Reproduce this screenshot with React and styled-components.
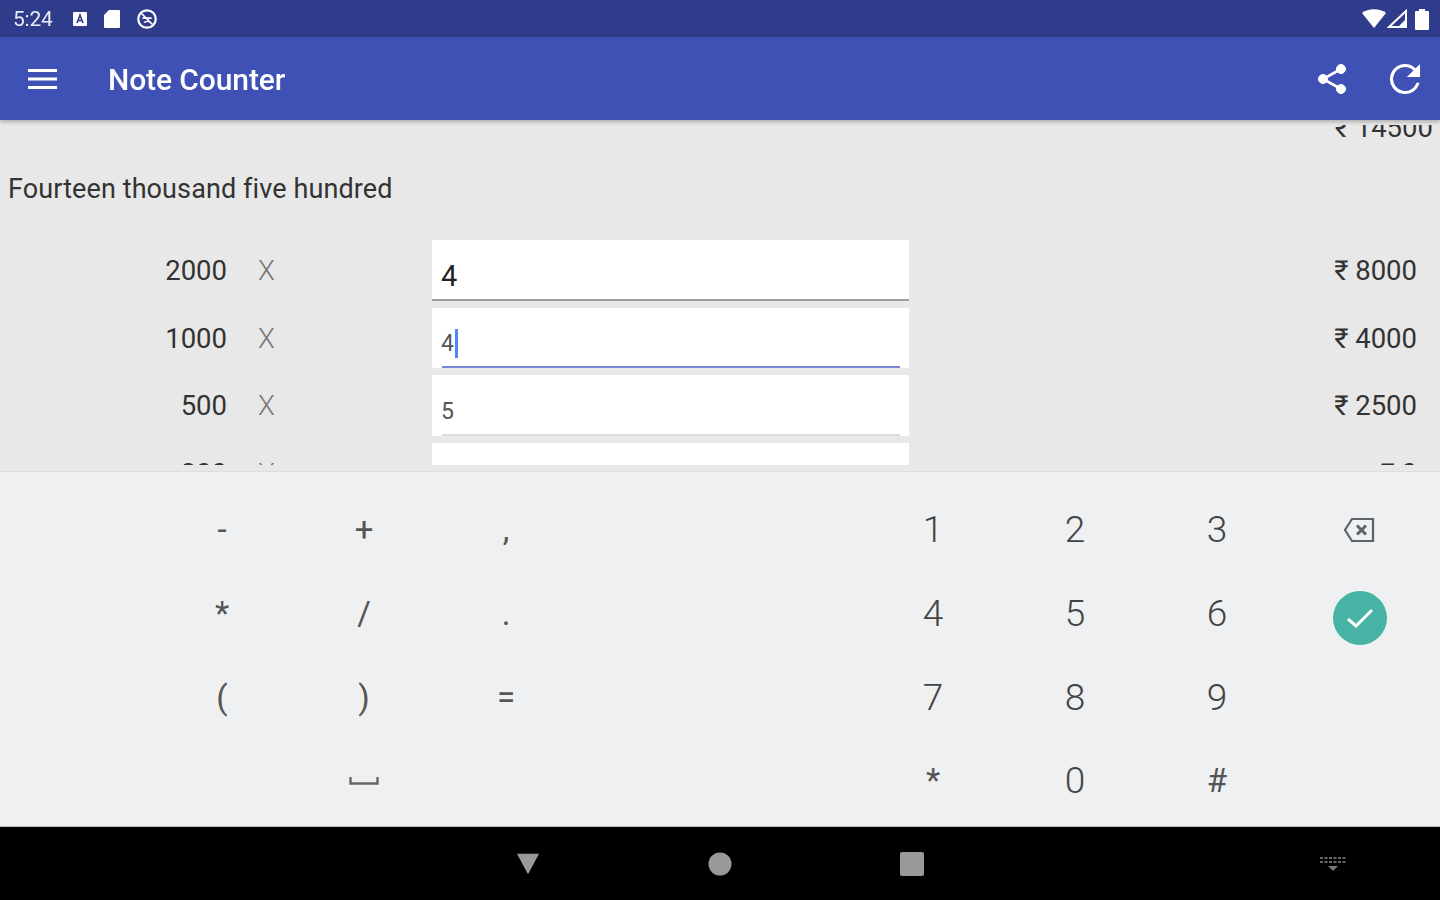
import React from "react";
import styled, { createGlobalStyle } from "styled-components";

const GlobalStyle = createGlobalStyle`
  html, body {
    margin: 0;
    padding: 0;
    background: #000;
  }
  body {
    font-family: Roboto, "Noto Sans", sans-serif;
  }
`;

const Screen = styled.div`
  width: 1440px;
  height: 900px;
  display: flex;
  flex-direction: column;
  overflow: hidden;
  filter: blur(0.6px);
`;

const StatusBar = styled.div`
  height: 37px;
  flex: none;
  background: #2f3c8c;
  color: #fff;
  display: flex;
  align-items: center;
  padding: 0 10px 0 13px;
  font-size: 21px;
  letter-spacing: -0.2px;
`;

const StatusLeft = styled.div`
  display: flex;
  align-items: center;
  gap: 15px;
  flex: 1;
`;

const StatusTime = styled.span`
  margin-right: 4px;
  opacity: 0.9;
`;

const StatusRight = styled.div`
  display: flex;
  align-items: center;
  gap: 1px;
`;

const AppBar = styled.header`
  height: 83px;
  flex: none;
  background: #3f51b5;
  color: #fff;
  display: flex;
  align-items: center;
  padding: 0 19px 0 28px;
  box-shadow: 0 2px 4px rgba(0, 0, 0, 0.25);
  position: relative;
  z-index: 1;
`;

const Title = styled.h1`
  margin: 2px 0 0 51px;
  flex: 1;
  font-size: 30px;
  font-weight: 500;
  letter-spacing: -0.1px;
`;

const BarActions = styled.div`
  display: flex;
  align-items: center;
  gap: 42px;
`;

const Content = styled.main`
  height: 352px;
  flex: none;
  box-sizing: border-box;
  padding: 5px 0 6px;
  background: #e8e8e8;
  color: #333;
  border-bottom: 1px solid #dedede;
`;

const Scroller = styled.div`
  height: 100%;
  overflow: hidden;
`;

const Total = styled.div`
  margin-top: -12px;
  height: 30px;
  line-height: 30px;
  text-align: right;
  padding-right: 7px;
  font-size: 27.5px;
`;

const Words = styled.div`
  margin: 31px 0 0 8px;
  height: 30px;
  line-height: 30px;
  font-size: 27px;
  letter-spacing: 0.1px;
`;

const Rows = styled.div`
  margin-top: 36px;
  display: flex;
  flex-direction: column;
  gap: 7px;
`;

const Row = styled.div`
  display: grid;
  grid-template-columns: 227px 78px 127px 477px 1fr;
  grid-template-rows: 60.5px;
  flex: none;
  font-size: 27.5px;
`;

const Note = styled.div`
  text-align: right;
  line-height: 61px;
`;

const Times = styled.div`
  color: #777;
  padding-left: 31px;
  line-height: 61px;
  font-weight: 300;
`;

const Field = styled.div`
  grid-column: 4;
  background: #fff;
  position: relative;
  box-sizing: border-box;
  padding: 12px 0 0 9px;
  display: flex;
  align-items: center;
  font-size: ${({ $large }) => ($large ? "29px" : "23px")};
  color: ${({ $large }) => ($large ? "#222" : "#555")};

  &::after {
    content: "";
    position: absolute;
    bottom: 0;
    height: 2px;
    left: ${({ $line }) => ($line === "full" ? "0" : "10px")};
    right: ${({ $line }) => ($line === "full" ? "0" : "9px")};
    background: ${({ $line }) =>
      $line === "full" ? "#9e9e9e" : $line === "active" ? "#7b86d6" : "#dcdcdc"};
  }
`;

const Caret = styled.span`
  display: inline-block;
  width: 3px;
  height: 29px;
  margin-left: 1px;
  background: #4f86f7;
`;

const Amount = styled.div`
  text-align: right;
  padding-right: 23px;
  line-height: 61px;
  white-space: nowrap;
`;

const Keyboard = styled.section`
  height: 355px;
  flex: none;
  box-sizing: border-box;
  background: #eef0f2;
  padding: 16px 10px 0 151px;
  display: grid;
  grid-template-columns: repeat(3, 142px) 285px repeat(4, 142px);
  grid-auto-rows: 83.7px;
  border-bottom: 1px solid #bbb;
`;

const Key = styled.div`
  grid-column: ${({ $col }) => $col};
  grid-row: ${({ $row }) => $row};
  display: flex;
  align-items: center;
  justify-content: center;
  font-size: ${({ $symbol }) => ($symbol ? "33px" : "37px")};
  font-weight: ${({ $symbol }) => ($symbol ? 400 : 300)};
  color: ${({ $symbol }) => ($symbol ? "#555" : "#444")};
`;

const Done = styled.div`
  width: 54px;
  height: 54px;
  border-radius: 50%;
  background: #46b3a4;
  display: flex;
  align-items: center;
  justify-content: center;
  margin: 8px 0 0 1px;
`;

const NavBar = styled.nav`
  flex: 1;
  background: #000;
  position: relative;
  display: flex;
  align-items: center;
  justify-content: center;
  gap: 168px;
`;

const NavSlot = styled.div`
  width: 24px;
  height: 24px;
  display: flex;
  align-items: center;
  justify-content: center;
`;

const KeyboardSwitch = styled.div`
  position: absolute;
  right: 94px;
  top: 29px;
  line-height: 0;
`;

const symbolKeys = [
  ["-", 1, 1], ["+", 2, 1], [",", 3, 1],
  ["*", 1, 2], ["/", 2, 2], [".", 3, 2],
  ["(", 1, 3], [")", 2, 3], ["=", 3, 3],
];

const digitKeys = [
  ["1", 5, 1], ["2", 6, 1], ["3", 7, 1],
  ["4", 5, 2], ["5", 6, 2], ["6", 7, 2],
  ["7", 5, 3], ["8", 6, 3], ["9", 7, 3],
  ["*", 5, 4, true], ["0", 6, 4], ["#", 7, 4, true],
];

const notes = [
  { note: 2000, count: "4", total: 8000, line: "full", large: true },
  { note: 1000, count: "4", total: 4000, line: "active", caret: true },
  { note: 500, count: "5", total: 2500, line: "idle" },
];

export default function App() {
  return (
    <Screen>
      <GlobalStyle />
      <StatusBar>
        <StatusLeft>
          <StatusTime>5:24</StatusTime>
          <svg width="16" height="16" viewBox="0 0 16 16">
            <rect x="1" y="1" width="14" height="14" rx="1" fill="#fff" />
            <path d="M5 12 8 4l3 8M6.2 9.5h3.6" stroke="#2f3c8c" strokeWidth="1.6" fill="none" />
          </svg>
          <svg width="18" height="20" viewBox="0 0 18 20">
            <path d="M6 1h10a1 1 0 0 1 1 1v16a1 1 0 0 1-1 1H2a1 1 0 0 1-1-1V6z" fill="#fff" />
          </svg>
          <svg width="22" height="22" viewBox="0 0 24 24" fill="none" stroke="#fff">
            <circle cx="12" cy="12" r="9.5" strokeWidth="2.4" />
            <path d="M6 6l12 12M7 11h10M9 16c2-2 5-2 7 0" strokeWidth="1.8" />
          </svg>
        </StatusLeft>
        <StatusRight>
          <svg width="24" height="20" viewBox="0 0 24 20">
            <path d="M0 4C6-1 18-1 24 4L12 19z" fill="#fff" />
          </svg>
          <svg width="20" height="20" viewBox="0 0 20 20">
            <path d="M19 18V2L2 18z" fill="none" stroke="#fff" strokeWidth="2" />
            <path d="M19 18v-8l-8 8z" fill="#fff" />
          </svg>
          <svg width="16" height="22" viewBox="0 0 16 22" style={{ marginLeft: 6 }}>
            <path d="M5 1h6v2h3a1 1 0 0 1 1 1v17a1 1 0 0 1-1 1H2a1 1 0 0 1-1-1V4a1 1 0 0 1 1-1h3z" fill="#fff" />
          </svg>
        </StatusRight>
      </StatusBar>

      <AppBar>
        <svg width="29" height="20" viewBox="0 0 29 20" fill="#fff">
          <rect y="0" width="29" height="3" />
          <rect y="8.5" width="29" height="3" />
          <rect y="17" width="29" height="3" />
        </svg>
        <Title>Note Counter</Title>
        <BarActions>
          <svg width="30" height="32" viewBox="0 0 30 32" fill="#fff" stroke="#fff">
            <circle cx="24" cy="6" r="4.5" />
            <circle cx="6" cy="16" r="4.5" />
            <circle cx="24" cy="26" r="4.5" />
            <path d="M24 6 6 16l18 10" fill="none" strokeWidth="2.6" />
          </svg>
          <svg width="32" height="32" viewBox="3.5 3.5 17 17" fill="#fff">
            <path d="M17.65 6.35A7.96 7.96 0 0 0 12 4a8 8 0 1 0 7.73 10h-1.6A6.4 6.4 0 1 1 12 5.600c1.780 0 3.380.72 4.500 1.900L13 11h7V4z" />
          </svg>
        </BarActions>
      </AppBar>

      <Content>
        <Scroller>
          <Total>₹ 14500</Total>
          <Words>Fourteen thousand five hundred</Words>
          <Rows>
            {notes.map((row) => (
              <Row key={row.note}>
                <Note>{row.note}</Note>
                <Times>X</Times>
                <Field $line={row.line} $large={row.large}>
                  {row.count}
                  {row.caret && <Caret />}
                </Field>
                <Amount>₹ {row.total}</Amount>
              </Row>
            ))}
            <Row>
              <Note>200</Note>
              <Times>X</Times>
              <Field $line="idle" />
              <Amount>₹ 0</Amount>
            </Row>
          </Rows>
        </Scroller>
      </Content>

      <Keyboard>
        {symbolKeys.map(([label, col, row]) => (
          <Key key={label} $col={col} $row={row} $symbol>
            {label}
          </Key>
        ))}
        <Key $col={2} $row={4}>
          <svg width="30" height="10" viewBox="0 0 30 10" fill="none" stroke="#666" strokeWidth="2.4">
            <path d="M1.5 1v6.5h27V1" />
          </svg>
        </Key>
        {digitKeys.map(([label, col, row, symbol]) => (
          <Key key={label} $col={col} $row={row} $symbol={symbol}>
            {label}
          </Key>
        ))}
        <Key $col={8} $row={1}>
          <svg width="32" height="26" viewBox="0 0 32 26" fill="none" stroke="#5f6368" strokeWidth="2.2">
            <path d="M9 2h21v22H9L2 13z" />
            <path d="M14 8.5l9 9M23 8.5l-9 9" strokeWidth="3" />
          </svg>
        </Key>
        <Key $col={8} $row={2}>
          <Done>
            <svg width="28" height="22" viewBox="0 0 28 22" fill="none" stroke="#fff" strokeWidth="3">
              <path d="M2 12l8 7L26 3" />
            </svg>
          </Done>
        </Key>
      </Keyboard>

      <NavBar>
        <NavSlot>
          <svg width="26" height="24" viewBox="0 0 26 24">
            <path d="M1 1h24L13 23z" fill="#999" />
          </svg>
        </NavSlot>
        <NavSlot>
          <svg width="24" height="24" viewBox="0 0 24 24">
            <circle cx="12" cy="12" r="11.5" fill="#999" />
          </svg>
        </NavSlot>
        <NavSlot>
          <svg width="24" height="24" viewBox="0 0 24 24">
            <rect x="0" y="0" width="24" height="24" rx="2" fill="#999" />
          </svg>
        </NavSlot>
        <KeyboardSwitch>
          <svg width="26" height="16" viewBox="0 0 26 16" fill="#666">
            <path d="M0 1h3v2H0zM4.500 1h3v2h-3zM9 1h3v2H9zM13.500 1h3v2h-3zM18 1h3v2h-3zM22.500 1h3v2h-3zM0 5h3v2H0zM4.500 5h3v2h-3zM9 5h3v2H9zM13.500 5h3v2h-3zM18 5h3v2h-3zM22.500 5h3v2h-3z" />
            <path d="M8 10h10l-5 5z" fill="#777" />
          </svg>
        </KeyboardSwitch>
      </NavBar>
    </Screen>
  );
}
